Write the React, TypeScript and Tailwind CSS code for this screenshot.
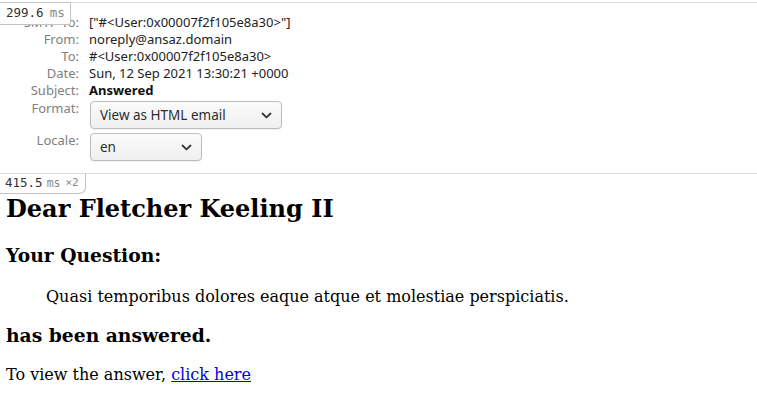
const headerRows = [
  { label: 'SMTP-To:', value: '["#<User:0x00007f2f105e8a30>"]' },
  { label: 'From:', value: 'noreply@ansaz.domain' },
  { label: 'To:', value: '#<User:0x00007f2f105e8a30>' },
  { label: 'Date:', value: 'Sun, 12 Sep 2021 13:30:21 +0000' },
]

function Chevron() {
  return (
    <svg width="11" height="7" viewBox="0 0 11 7" aria-hidden="true">
      <polyline points="1.5,1.5 5.5,5.3 9.5,1.5" fill="none" stroke="#333" strokeWidth="1.8" strokeLinecap="round" strokeLinejoin="round" />
    </svg>
  )
}

function FakeSelect({ value, width }: { value: string; width: string }) {
  return (
    <div
      className={`${width} h-[28px] my-[1px] flex items-center justify-between pl-[9px] pr-[9px] rounded-[4px] border border-[#bdbdbd] bg-gradient-to-b from-[#fbfbfb] to-[#efefef] shadow-[0_1px_1px_rgba(0,0,0,0.06)] text-[13.5px] text-[#2e2e2e]`}
    >
      <span>{value}</span>
      <Chevron />
    </div>
  )
}

export default function App() {
  return (
    <div className="relative w-[757px] h-[402px] overflow-hidden bg-white">
      {/* mailer preview header */}
      <header className="mt-[2px] border-t border-b border-[#dcdcdc] pt-[11px] pb-[10px] font-['Noto_Sans',sans-serif] text-[13px] leading-[15px]">
        {headerRows.map(({ label, value }) => (
          <div key={label} className="flex py-[1px]">
            <div className="w-[79px] shrink-0 text-right text-[#7f7f7f]">{label}</div>
            <div className="ml-[10px] text-[#222]">{value}</div>
          </div>
        ))}
        <div className="flex py-[1px]">
          <div className="w-[79px] shrink-0 text-right text-[#7f7f7f]">Subject:</div>
          <div className="ml-[10px] font-bold text-[#111]">Answered</div>
        </div>
        <div className="flex py-[1px]">
          <div className="w-[79px] shrink-0 pt-[1px] text-right text-[#7f7f7f]">Format:</div>
          <div className="ml-[11px]">
            <FakeSelect value="View as HTML email" width="w-[192px]" />
          </div>
        </div>
        <div className="flex py-[1px]">
          <div className="w-[79px] shrink-0 pt-[1px] text-right text-[#7f7f7f]">Locale:</div>
          <div className="ml-[11px]">
            <FakeSelect value="en" width="w-[112px]" />
          </div>
        </div>
      </header>

      {/* profiler badge for the page */}
      <div className="absolute left-0 top-[2px] h-[23px] w-[71px] flex items-center pl-[6px] bg-white border-t border-r border-b border-[#c4c4c4] rounded-br-[3px] font-['DejaVu_Sans_Mono',monospace] text-[12.5px] text-[#333]">
        299.6<span className="ml-[6px] text-[#888]">ms</span>
      </div>

      {/* rendered email body */}
      <div className="relative px-[6px] pt-[21px] font-['DejaVu_Serif',serif] text-black">
        <div className="absolute left-0 top-0 h-[20px] w-[86px] flex items-center pl-[5px] bg-white border-r border-b border-[#c4c4c4] rounded-br-[7px] font-['DejaVu_Sans_Mono',monospace] text-[12.5px] text-[#333]">
          415.5<span className="ml-[4px] text-[11.5px] text-[#888]">ms</span>
          <span className="ml-[5px] text-[11px] text-[#888]">×2</span>
        </div>

        <h2 className="text-[24px] font-bold leading-[28px]">Dear Fletcher Keeling II</h2>
        <h3 className="mt-[21px] text-[18.72px] font-bold leading-[22px]">Your Question:</h3>
        <blockquote className="mt-[21px] ml-[40px] text-[16px] leading-[19px]">
          Quasi temporibus dolores eaque atque et molestiae perspiciatis.
        </blockquote>
        <h3 className="mt-[18px] text-[18.72px] font-bold leading-[22px]">has been answered.</h3>
        <p className="mt-[19px] text-[16px] leading-[19px]">
          To view the answer,{' '}
          <a href="#" className="text-[#0000ee] underline">
            click here
          </a>
        </p>
      </div>
    </div>
  )
}
